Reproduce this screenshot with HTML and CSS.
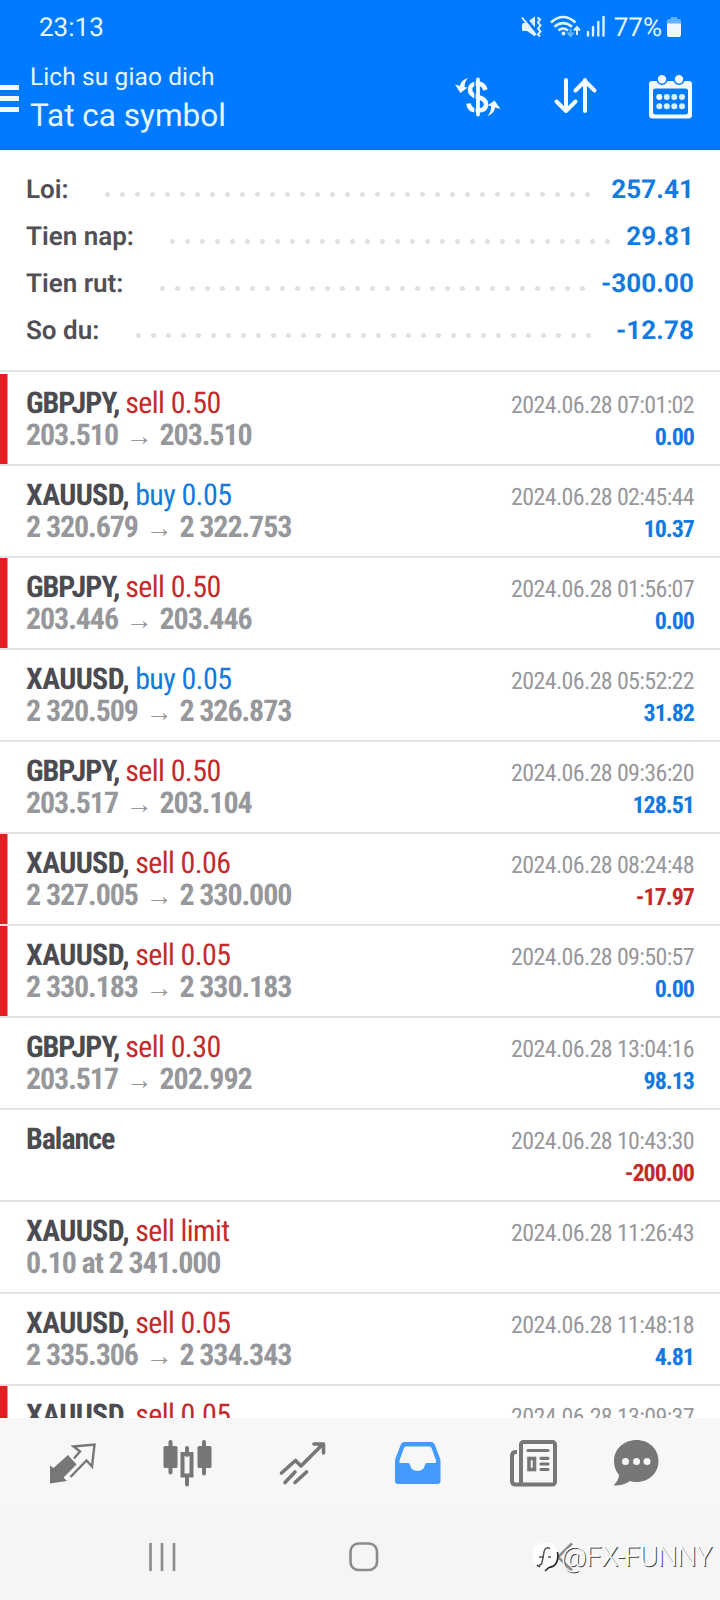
FILE: index.html
```html
<!DOCTYPE html>
<html lang="vi">
<head>
<meta charset="utf-8">
<title>Lich su giao dich</title>
<link rel="stylesheet" href="styles.css">
</head>
<body>
<div class="screen">
  <header class="header">
    <div class="status">
      <span class="clock">23:13</span>
      <div class="status-right">
        <svg class="status-icons" width="86" height="24" viewBox="0 0 86 24">
          <path d="M1 9.500q0-1.500 1.500-1.500H5l9-6.500v20l-8-5.500h-3.500q-1.500 0-1.500-1.500z" fill="#e4f4ff"/>
          <path d="M2 .5l15 18" stroke="#007aff" stroke-width="3"/>
          <path d="M1 2.500l14 17.500" stroke="#e4f4ff" stroke-width="2"/>
          <path d="M16.500 2.500l2.500 2-2 3 2.500 3-2.500 3 2.500 3-2.500 3 2 2" fill="none" stroke="#d7f0ff" stroke-width="2"/>
          <g fill="none" stroke="#dcf3ff" stroke-width="2.600">
            <path d="M30 7.500q12-11 24.500 0"/>
            <path d="M33.500 11.800q8.500-7.500 17.500 0"/>
            <path d="M37.500 15.500q4.500-4 9.500 0"/>
            <path d="M56 20v-7M53 15.500l3-3.500 3 3.500" stroke-width="2"/>
            <path d="M49.500 14v7M46.500 17.500l3 3.500 3-3.500" stroke="#65b4ff" stroke-width="2"/>
            <path d="M67 17v3.500M72 12v8.500M77.300 7v13.500M82.500 2v18.500" stroke-width="2.400" stroke-linecap="round"/>
          </g>
          <circle cx="42.500" cy="18.500" r="2" fill="#dcf3ff"/>
        </svg>
        <span class="percent">77%</span>
        <svg width="14" height="22" viewBox="0 0 14 22"><path d="M4 1h6v2h2a2 2 0 0 1 2 2v4H0V5a2 2 0 0 1 2-2h2z" fill="#65b0ff"/><path d="M0 7.500h14V19a2 2 0 0 1-2 2H2a2 2 0 0 1-2-2z" fill="#edf7ff"/></svg>
      </div>
    </div>
    <div class="bar">
      <div class="menu"><i></i><i></i><i></i></div>
      <div class="titles">
        <div class="title-small">Lich su giao dich</div>
        <div class="title-big">Tat ca symbol</div>
      </div>
      <div class="actions">
        <svg width="46" height="40" viewBox="0 0 46 40" fill="none" stroke="#f4faff">
          <path d="M23 2.500v35" stroke-width="3.800" stroke-linecap="round"/>
          <path d="M30.500 13C29 8 26 6.500 22.500 6.500C17 6.500 15 9.500 15 12.500C15 17.500 19 19 22.500 20C27 21.200 31 22.500 31 27.500C31 32 27 33.500 22.500 33.500C17 33.500 14 31 13.500 26.500" stroke-width="4.600"/>
          <path d="M20 3v34" stroke="#007aff" stroke-width="1.400"/>
          <path d="M13 1C7 3 5.500 6 5 9L0 7.500L5.500 16L12.500 10.500L9.500 10C9.500 6 11 3 13 1z" fill="#f4faff" stroke="none"/>
          <path d="M32.500 39C38 37 39.500 34 40 30.500L45.500 32L39.500 23.500L32.500 28.500L36 29C36.500 33 35 36 32.500 39z" fill="#f4faff" stroke="none"/>
        </svg>
        <svg width="44" height="38" viewBox="0 0 44 38" fill="none" stroke="#f4faff" stroke-width="4" stroke-linecap="round" stroke-linejoin="round">
          <path d="M13 2v31M3.500 23.500l9.500 9.500 9.500-9.500"/><path d="M32 33V2M22.500 12.500l9.500-9.500 9.500 9.500"/>
        </svg>
        <svg width="46" height="46" viewBox="0 0 46 46">
          <path d="M4 7h37a3 3 0 0 1 3 3v31a3.500 3.500 0 0 1-3.500 3.500h-36A3.500 3.500 0 0 1 1 41V10a3 3 0 0 1 3-3z" fill="#f4faff"/>
          <rect x="5" y="14.500" width="35" height="26" rx="2.500" fill="#007aff"/>
          <g fill="#f4faff" stroke="#007aff" stroke-width="1.600"><circle cx="14" cy="5.200" r="5"/><circle cx="31" cy="5.200" r="5"/></g>
          <g fill="#d8f1ff"><circle cx="11.300" cy="23" r="3" fill="#fff"/><circle cx="18.800" cy="23" r="3"/><circle cx="26.300" cy="23" r="3"/><circle cx="34" cy="23" r="3"/><circle cx="11.300" cy="32.300" r="3"/><circle cx="18.800" cy="32.300" r="3"/><circle cx="26.300" cy="32.300" r="3"/><circle cx="34" cy="32.300" r="3"/></g>
        </svg>
      </div>
    </div>
  </header>

  <section class="summary">
    <div class="sum-row"><span>Loi:</span><i class="dots"></i><b>257.41</b></div>
    <div class="sum-row"><span>Tien nap:</span><i class="dots"></i><b>29.81</b></div>
    <div class="sum-row"><span>Tien rut:</span><i class="dots"></i><b>-300.00</b></div>
    <div class="sum-row"><span>So du:</span><i class="dots"></i><b>-12.78</b></div>
  </section>

  <main class="list">
    <article class="deal stop"><div class="line"><span class="name">GBPJPY, <em class="sell">sell 0.50</em></span><time>2024.06.28 07:01:02</time></div><div class="line"><span class="price">203.510 <u>→</u> 203.510</span><b class="up">0.00</b></div></article>
    <article class="deal"><div class="line"><span class="name gold">XAUUSD, <em class="buy">buy 0.05</em></span><time>2024.06.28 02:45:44</time></div><div class="line"><span class="price">2 320.679 <u>→</u> 2 322.753</span><b class="up">10.37</b></div></article>
    <article class="deal stop"><div class="line"><span class="name">GBPJPY, <em class="sell">sell 0.50</em></span><time>2024.06.28 01:56:07</time></div><div class="line"><span class="price">203.446 <u>→</u> 203.446</span><b class="up">0.00</b></div></article>
    <article class="deal"><div class="line"><span class="name gold">XAUUSD, <em class="buy">buy 0.05</em></span><time>2024.06.28 05:52:22</time></div><div class="line"><span class="price">2 320.509 <u>→</u> 2 326.873</span><b class="up">31.82</b></div></article>
    <article class="deal"><div class="line"><span class="name">GBPJPY, <em class="sell">sell 0.50</em></span><time>2024.06.28 09:36:20</time></div><div class="line"><span class="price">203.517 <u>→</u> 203.104</span><b class="up">128.51</b></div></article>
    <article class="deal stop"><div class="line"><span class="name gold">XAUUSD, <em class="sell">sell 0.06</em></span><time>2024.06.28 08:24:48</time></div><div class="line"><span class="price">2 327.005 <u>→</u> 2 330.000</span><b class="down">-17.97</b></div></article>
    <article class="deal stop"><div class="line"><span class="name gold">XAUUSD, <em class="sell">sell 0.05</em></span><time>2024.06.28 09:50:57</time></div><div class="line"><span class="price">2 330.183 <u>→</u> 2 330.183</span><b class="up">0.00</b></div></article>
    <article class="deal"><div class="line"><span class="name">GBPJPY, <em class="sell">sell 0.30</em></span><time>2024.06.28 13:04:16</time></div><div class="line"><span class="price">203.517 <u>→</u> 202.992</span><b class="up">98.13</b></div></article>
    <article class="deal"><div class="line"><span class="name">Balance</span><time>2024.06.28 10:43:30</time></div><div class="line"><span class="price">&nbsp;</span><b class="down">-200.00</b></div></article>
    <article class="deal"><div class="line"><span class="name gold">XAUUSD, <em class="sell">sell limit</em></span><time>2024.06.28 11:26:43</time></div><div class="line"><span class="price">0.10 at 2 341.000</span></div></article>
    <article class="deal"><div class="line"><span class="name gold">XAUUSD, <em class="sell">sell 0.05</em></span><time>2024.06.28 11:48:18</time></div><div class="line"><span class="price">2 335.306 <u>→</u> 2 334.343</span><b class="up">4.81</b></div></article>
    <article class="deal stop"><div class="line"><span class="name gold">XAUUSD, <em class="sell">sell 0.05</em></span><time>2024.06.28 13:09:37</time></div></article>
  </main>

  <nav class="tabs">
    <svg width="48" height="48" viewBox="0 0 48 48">
      <path d="M2 25.500L5.500 28L20 15L28.500 24.500L15.500 37.500L19 41L2 43.500z" fill="#777"/>
      <path d="M26 18.500L32 11.500L25.500 6.500L46.500 4.500L44 26.500L38.500 20.500L22.500 37" fill="none" stroke="#777" stroke-width="2.400"/>
    </svg>
    <svg width="48" height="48" viewBox="0 0 48 48">
      <g fill="#777"><rect x=".5" y="6" width="14" height="22" rx="1.500"/><rect x="34.500" y="6" width="14" height="22" rx="1.500"/></g>
      <path d="M7.500 2v30.500M41 2v31.500M24 8v7M24 36v8.500" stroke="#777" stroke-width="4" stroke-linecap="round"/>
      <rect x="19.500" y="14" width="9" height="21.500" fill="none" stroke="#777" stroke-width="4"/>
    </svg>
    <svg width="48" height="48" viewBox="0 0 48 48" fill="none" stroke="#777" stroke-width="3.600" stroke-linecap="round" stroke-linejoin="round">
      <path d="M3.500 33L17.500 20.500L23 26L45 4M36 4h9.500v9M7 42.500l10-10.500M17 42.500l11.500-10.500"/>
    </svg>
    <svg width="48" height="48" viewBox="0 0 48 48">
      <path fill-rule="evenodd" d="M10 2h27q2.500 0 3.500 2l5 13q1 2 1 4v20q0 3-3 3H4q-3 0-3-3V21q0-2 1-4L7 4q1-2 3-2zM12 6.500Q10.500 6.500 10 8L5.500 20.500Q5 23 6 23H14Q16 23 16 25A7.700 7.700 0 0 0 31 25Q31 23 33 23H41Q42.500 23 42 20.500L37.500 8Q37 6.500 35.500 6.500z" fill="#449bff"/>
    </svg>
    <svg width="50" height="48" viewBox="0 0 50 48" fill="none" stroke="#777" stroke-width="4">
      <rect x="13" y="2" width="34" height="42.500" rx="2.500"/>
      <path d="M9 12H7.500Q4 12 4 16V41Q4 44.500 7.500 44.500H15"/>
      <path d="M20 10.500H40M33 18.300H40M33 24H40M33 29.500H40" stroke-width="3.200" stroke-linecap="round"/>
      <rect x="21" y="18.500" width="5.500" height="11" stroke-width="3.600"/>
    </svg>
    <svg width="48" height="48" viewBox="0 0 48 48">
      <path d="M24.500 0C37 0 46.500 9 46.500 21S37 42 24.500 42C22 42 20 41.600 18 41C13 44.500 7 46 1.500 45.500C4.500 42.500 7 38.500 7 35C3.500 31 2 26 2 21C2 9 12 0 24.500 0z" fill="#777"/>
      <g fill="#f7f7f7"><circle cx="13.500" cy="21.500" r="3.500"/><circle cx="24.500" cy="21.500" r="3.500"/><circle cx="35" cy="21.500" r="3.500"/></g>
    </svg>
  </nav>

  <footer class="sysnav">
    <svg width="28" height="30" viewBox="0 0 28 30"><path d="M2.500 1v28M14 1v28M26 1v28" stroke="#8b8b8b" stroke-width="2.600"/></svg>
    <svg class="home" width="30" height="30" viewBox="0 0 30 30"><rect x="1.500" y="1.500" width="26.500" height="26.500" rx="8" fill="none" stroke="#8b8b8b" stroke-width="2.600"/></svg>
    <svg width="18" height="30" viewBox="0 0 18 30"><path d="M16 1.500L2 15l14 13.500" fill="none" stroke="#8b8b8b" stroke-width="2.600"/></svg>
    <div class="watermark">
      <svg width="29" height="32" viewBox="0 0 29 32"><rect x="1" y="2" width="24" height="25" rx="9" fill="#fff"/><path d="M25.500 11Q27.500 25 17 26.500L13 30M5 24l3 2" fill="none" stroke="#222" stroke-width="1.500"/><path d="M18 7.500Q13 5 12 11L10 21.500Q9.500 24 7 24M7 16h5M16 16h3" fill="none" stroke="#555" stroke-width="1.500"/></svg>
      <span>@FX-FUNNY</span>
    </div>
  </footer>
</div>
</body>
</html>
```
FILE: styles.css
```css
* { box-sizing: border-box; }
body { margin: 0; font-family: Roboto, "Noto Sans", sans-serif; background: #fff; text-rendering: geometricPrecision; }
svg { display: block; flex: none; overflow: visible; }
.screen { width: 720px; height: 1600px; display: flex; flex-direction: column; overflow: hidden; }

.header { flex: none; height: 150px; background: #007aff; border-bottom: 1px solid #1a6fc8; color: #e6f7ff; }
.status { height: 54px; padding: 0 39px; display: flex; justify-content: space-between; align-items: center; font-size: 26px; line-height: 54px; }
.status-right { display: flex; align-items: center; }
.clock, .percent { padding-top: 2px; }
.percent { margin: 0 5px 0 7px; }
.bar { height: 95px; display: flex; align-items: flex-start; }
.menu { width: 19px; padding-top: 31px; display: flex; flex-direction: column; gap: 6px; }
.menu i { height: 5px; background: #f4faff; }
.titles { flex: 1; padding: 7px 0 0 11px; white-space: nowrap; }
.title-small { font-size: 24.500px; line-height: 32px; letter-spacing: .1px; }
.title-big { font-size: 31.500px; line-height: 45px; }
.actions { display: flex; align-items: center; padding: 20px 26px 0 0; gap: 51.500px; }

.summary { flex: none; height: 222px; padding: 17px 26px 0; border-bottom: 2px solid #e3e3e3; }
.sum-row { height: 47px; display: flex; font-size: 26px; line-height: 47px; font-weight: 600; color: #505056; }
.sum-row b { color: #127ae0; font-weight: 700; letter-spacing: .1px; }
.dots { flex: 1; height: 5px; margin: 25px 15.500px 0 36.500px; background: radial-gradient(circle at 2.5px 2.5px, #e2e2e2 2.2px, transparent 2.8px) 0 0 / 15px 5px repeat-x; }

.list { flex: none; height: 1046px; padding-top: 2px; overflow: hidden; font-family: "Roboto Condensed", Roboto, sans-serif; font-stretch: 75%; }
.deal { height: 92px; padding: 14px 26px 0; border-bottom: 2px solid #e3e3e3; }
.stop { background: linear-gradient(#e31d20, #e31d20) 0 0 / 7.5px 100% no-repeat; }
.line { display: flex; justify-content: space-between; align-items: baseline; height: 32px; line-height: 32px; white-space: nowrap; }
.name { font-size: 30px; font-weight: 700; color: #4b4b52; letter-spacing: -1.050px; }
.gold { letter-spacing: -.65px; }
.name em { font-style: normal; font-weight: 400; letter-spacing: -.6px; }
.price { font-size: 30px; font-weight: 700; color: #97989b; letter-spacing: -1.100px; }
.price u { text-decoration: none; font-size: 27px; margin: 0 2px; }
.line time { font-size: 24px; color: #98989c; letter-spacing: -.65px; }
.line b { font-size: 24px; font-weight: 700; letter-spacing: -1px; }
.buy, .line .up { color: #127ae0; }
.sell, .down { color: #c32b2b; }

.tabs { flex: none; height: 92px; padding: 22px 0 0 48px; display: grid; grid-template-columns: 115px 114.5px 116.5px 113.5px 104.5px 48px; background: #f7f7f7; }
.sysnav { flex: none; height: 90px; padding: 32px 146px 0 148px; display: flex; justify-content: space-between; background: #f5f5f5; position: relative; }
.home { margin-right: 4px; }
.watermark { position: absolute; left: 532px; top: 31px; display: flex; align-items: center; font-size: 28px; line-height: 32px; font-weight: 300; color: #fff; text-shadow: 1px 1px 0 #444; letter-spacing: -.6px; white-space: nowrap; }
```
